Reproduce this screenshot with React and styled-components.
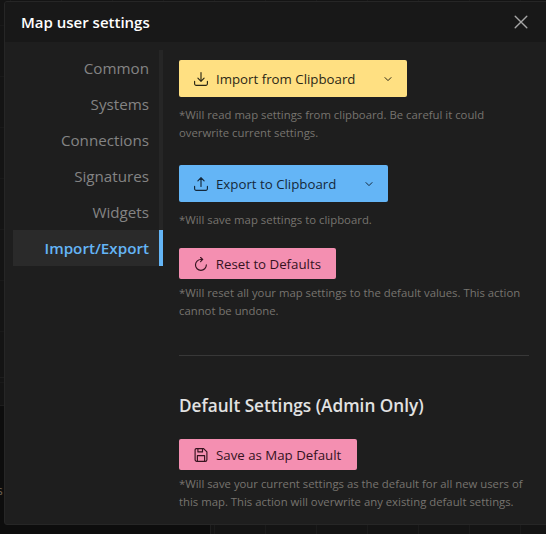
import React from 'react';
import styled, { createGlobalStyle } from 'styled-components';

const GlobalStyle = createGlobalStyle`
  * { box-sizing: border-box; }
  body {
    margin: 0;
    overflow: hidden;
    background: #111;
    font-family: "Open Sans", "Noto Sans", sans-serif;
  }
`;

const Screen = styled.div`
  position: relative;
  width: 546px;
  height: 534px;
  overflow: hidden;
  padding: 1px 0 0 4px;
  background:
    linear-gradient(#0d0d0d, #0d0d0d) 0 406px / 210px 128px no-repeat,
    linear-gradient(#1d1d1d, #1d1d1d) 0 405px / 210px 1px no-repeat,
    linear-gradient(#1d1d1d, #1d1d1d) 0 377px / 210px 1px no-repeat,
    linear-gradient(#1f1f1f, #1f1f1f) 210px 377px / 1px 157px no-repeat,
    repeating-linear-gradient(90deg, transparent 0 10px, #1b1b1b 10px 11px, transparent 11px 51px),
    repeating-linear-gradient(180deg, #141414 0 25px, #191919 25px 26px, #141414 26px 51px);
`;

const MapLabel = styled.span`
  position: absolute;
  left: -3px;
  top: 483px;
  color: #6d6255;
  font-size: 12px;
  line-height: 16px;
`;

const Dialog = styled.section`
  position: relative;
  display: flex;
  flex-direction: column;
  width: 560px;
  height: 524px;
  border: 1px solid #262626;
  border-radius: 3px;
  background: #1e1e1e;
  overflow: hidden;
`;

const Header = styled.header`
  display: flex;
  align-items: center;
  justify-content: space-between;
  height: 40px;
  flex: none;
  padding: 0 35px 0 16px;
  background: #181818;
`;

const Title = styled.h1`
  margin: 0;
  color: #fff;
  font-size: 15px;
  font-weight: 600;
  line-height: 24px;
`;

const CloseButton = styled.button`
  display: flex;
  padding: 0;
  border: 0;
  background: none;
  color: #a6a6a6;
`;

const Body = styled.div`
  display: flex;
  flex: 1;
  padding: 8px 0 0 8px;
`;

const Tabs = styled.nav`
  display: flex;
  flex-direction: column;
  flex: none;
  width: 150px;
  height: 216px;
`;

const Tab = styled.a`
  display: flex;
  align-items: center;
  justify-content: flex-end;
  height: 36px;
  padding-right: 10px;
  border-right: 4px solid ${(p) => (p.$active ? '#64b5f6' : '#262626')};
  background: ${(p) => (p.$active ? '#2a2a2a' : 'transparent')};
  color: ${(p) => (p.$active ? '#64b5f6' : '#848484')};
  font-size: 15.2px;
  font-weight: ${(p) => (p.$active ? 600 : 400)};
  line-height: 24px;
`;

const Panel = styled.main`
  display: flex;
  flex-direction: column;
  width: 350px;
  margin: 10px 0 0 16px;
`;

const Action = styled.section`
  display: flex;
  flex-direction: column;
  align-items: flex-start;
  gap: ${(p) => p.$gap}px;
  margin-bottom: ${(p) => p.$after || 0}px;
`;

const Button = styled.button`
  display: flex;
  align-items: center;
  width: ${(p) => p.$width}px;
  height: ${(p) => p.$height || 31}px;
  padding: 0 15px;
  border: 0;
  border-radius: 2px;
  background: ${(p) => p.$color};
  color: ${(p) => p.$ink};
  font-family: inherit;
  font-size: 13.28px;
  line-height: 20px;
  white-space: nowrap;
`;

const Label = styled.span`
  flex: 1;
  margin-left: 8px;
  text-align: left;
`;

const Hint = styled.p`
  margin: 0;
  color: #77746f;
  font-size: 11.34px;
  line-height: 18px;
  white-space: nowrap;
  letter-spacing: ${(p) => p.$tracking || 0}px;
`;

const Divider = styled.hr`
  width: 350px;
  height: 1px;
  margin: 0 0 38px;
  border: 0;
  background: #383838;
`;

const Heading = styled.h2`
  margin: 0 0 21px;
  color: #e2e2e2;
  font-size: 17.2px;
  font-weight: 600;
  line-height: 24px;
  white-space: nowrap;
`;

const Glyph = ({ children, size = 14, box = '0 0 14 14', width = 1.15 }) => (
  <svg width={size} height={size} viewBox={box} fill="none" stroke="currentColor"
    strokeWidth={width} strokeLinecap="round" strokeLinejoin="round">
    {children}
  </svg>
);

const TRAY = 'M.6 9.2v2.6a1.6 1.6 0 0 0 1.6 1.6h9.6a1.6 1.6 0 0 0 1.6-1.6V9.2';
const DownloadIcon = () => <Glyph><path d={`${TRAY}M7 .6v8.6M3.9 6.2 7 9.3l3.1-3.1`} /></Glyph>;
const UploadIcon = () => <Glyph><path d={`${TRAY}M7 9.4V.7M3.9 3.8 7 .7l3.1 3.1`} /></Glyph>;
const RefreshIcon = () => <Glyph><path d="M8.8 2.4H7a5.5 5.5 0 1 0 5.5 5.5M6.7.4l2.1 2-2.1 2.1" /></Glyph>;
const SaveIcon = () => (
  <Glyph><path d="M2.3.6h7.3l3.3 3.3v7.8a1.7 1.7 0 0 1-1.7 1.7H2.8a1.7 1.7 0 0 1-1.7-1.7V1.8A1.2 1.2 0 0 1 2.3.6M3.4 13.2V7.6h7.2v5.6M3.9.8v3.1h4.6V.8" /></Glyph>
);
const ChevronIcon = () => <Glyph size={8} box="0 0 8 8" width={1}><path d="m1 2.6 3 3 3-3" /></Glyph>;
const CloseIcon = () => <Glyph width={1.4}><path d="m1.2 1.2 11.6 11.6M12.8 1.2 1.2 12.8" /></Glyph>;

const tabs = ['Common', 'Systems', 'Connections', 'Signatures', 'Widgets', 'Import/Export'];

export default function App() {
  return (
    <Screen>
      <GlobalStyle />
      <MapLabel>s</MapLabel>
      <Dialog>
        <Header>
          <Title>Map user settings</Title>
          <CloseButton aria-label="Close"><CloseIcon /></CloseButton>
        </Header>
        <Body>
          <Tabs>
            {tabs.map((name) => <Tab key={name} $active={name === 'Import/Export'}>{name}</Tab>)}
          </Tabs>
          <Panel>
            <Action $gap={9} $after={23}>
              <Button $width={228} $height={37} $color="#ffe082" $ink="#2b2715">
                <DownloadIcon /><Label>Import from Clipboard</Label><ChevronIcon />
              </Button>
              <Hint>*Will read map settings from clipboard. Be careful it could<br />overwrite current settings.</Hint>
            </Action>
            <Action $gap={9} $after={19}>
              <Button $width={209} $height={37} $color="#64b5f6" $ink="#14283a">
                <UploadIcon /><Label>Export to Clipboard</Label><ChevronIcon />
              </Button>
              <Hint $tracking={0.02}>*Will save map settings to clipboard.</Hint>
            </Action>
            <Action $gap={5} $after={35}>
              <Button $width={157} $color="#f48fb1" $ink="#35131f">
                <RefreshIcon /><Label>Reset to Defaults</Label>
              </Button>
              <Hint>*Will reset all your map settings to the default values. This action<br />cannot be undone.</Hint>
            </Action>
            <Divider />
            <Heading>Default Settings (Admin Only)</Heading>
            <Action $gap={5}>
              <Button $width={178} $color="#f48fb1" $ink="#35131f">
                <SaveIcon /><Label>Save as Map Default</Label>
              </Button>
              <Hint>*Will save your current settings as the default for all new users of<br />this map. This action will overwrite any existing default settings.</Hint>
            </Action>
          </Panel>
        </Body>
      </Dialog>
    </Screen>
  );
}
